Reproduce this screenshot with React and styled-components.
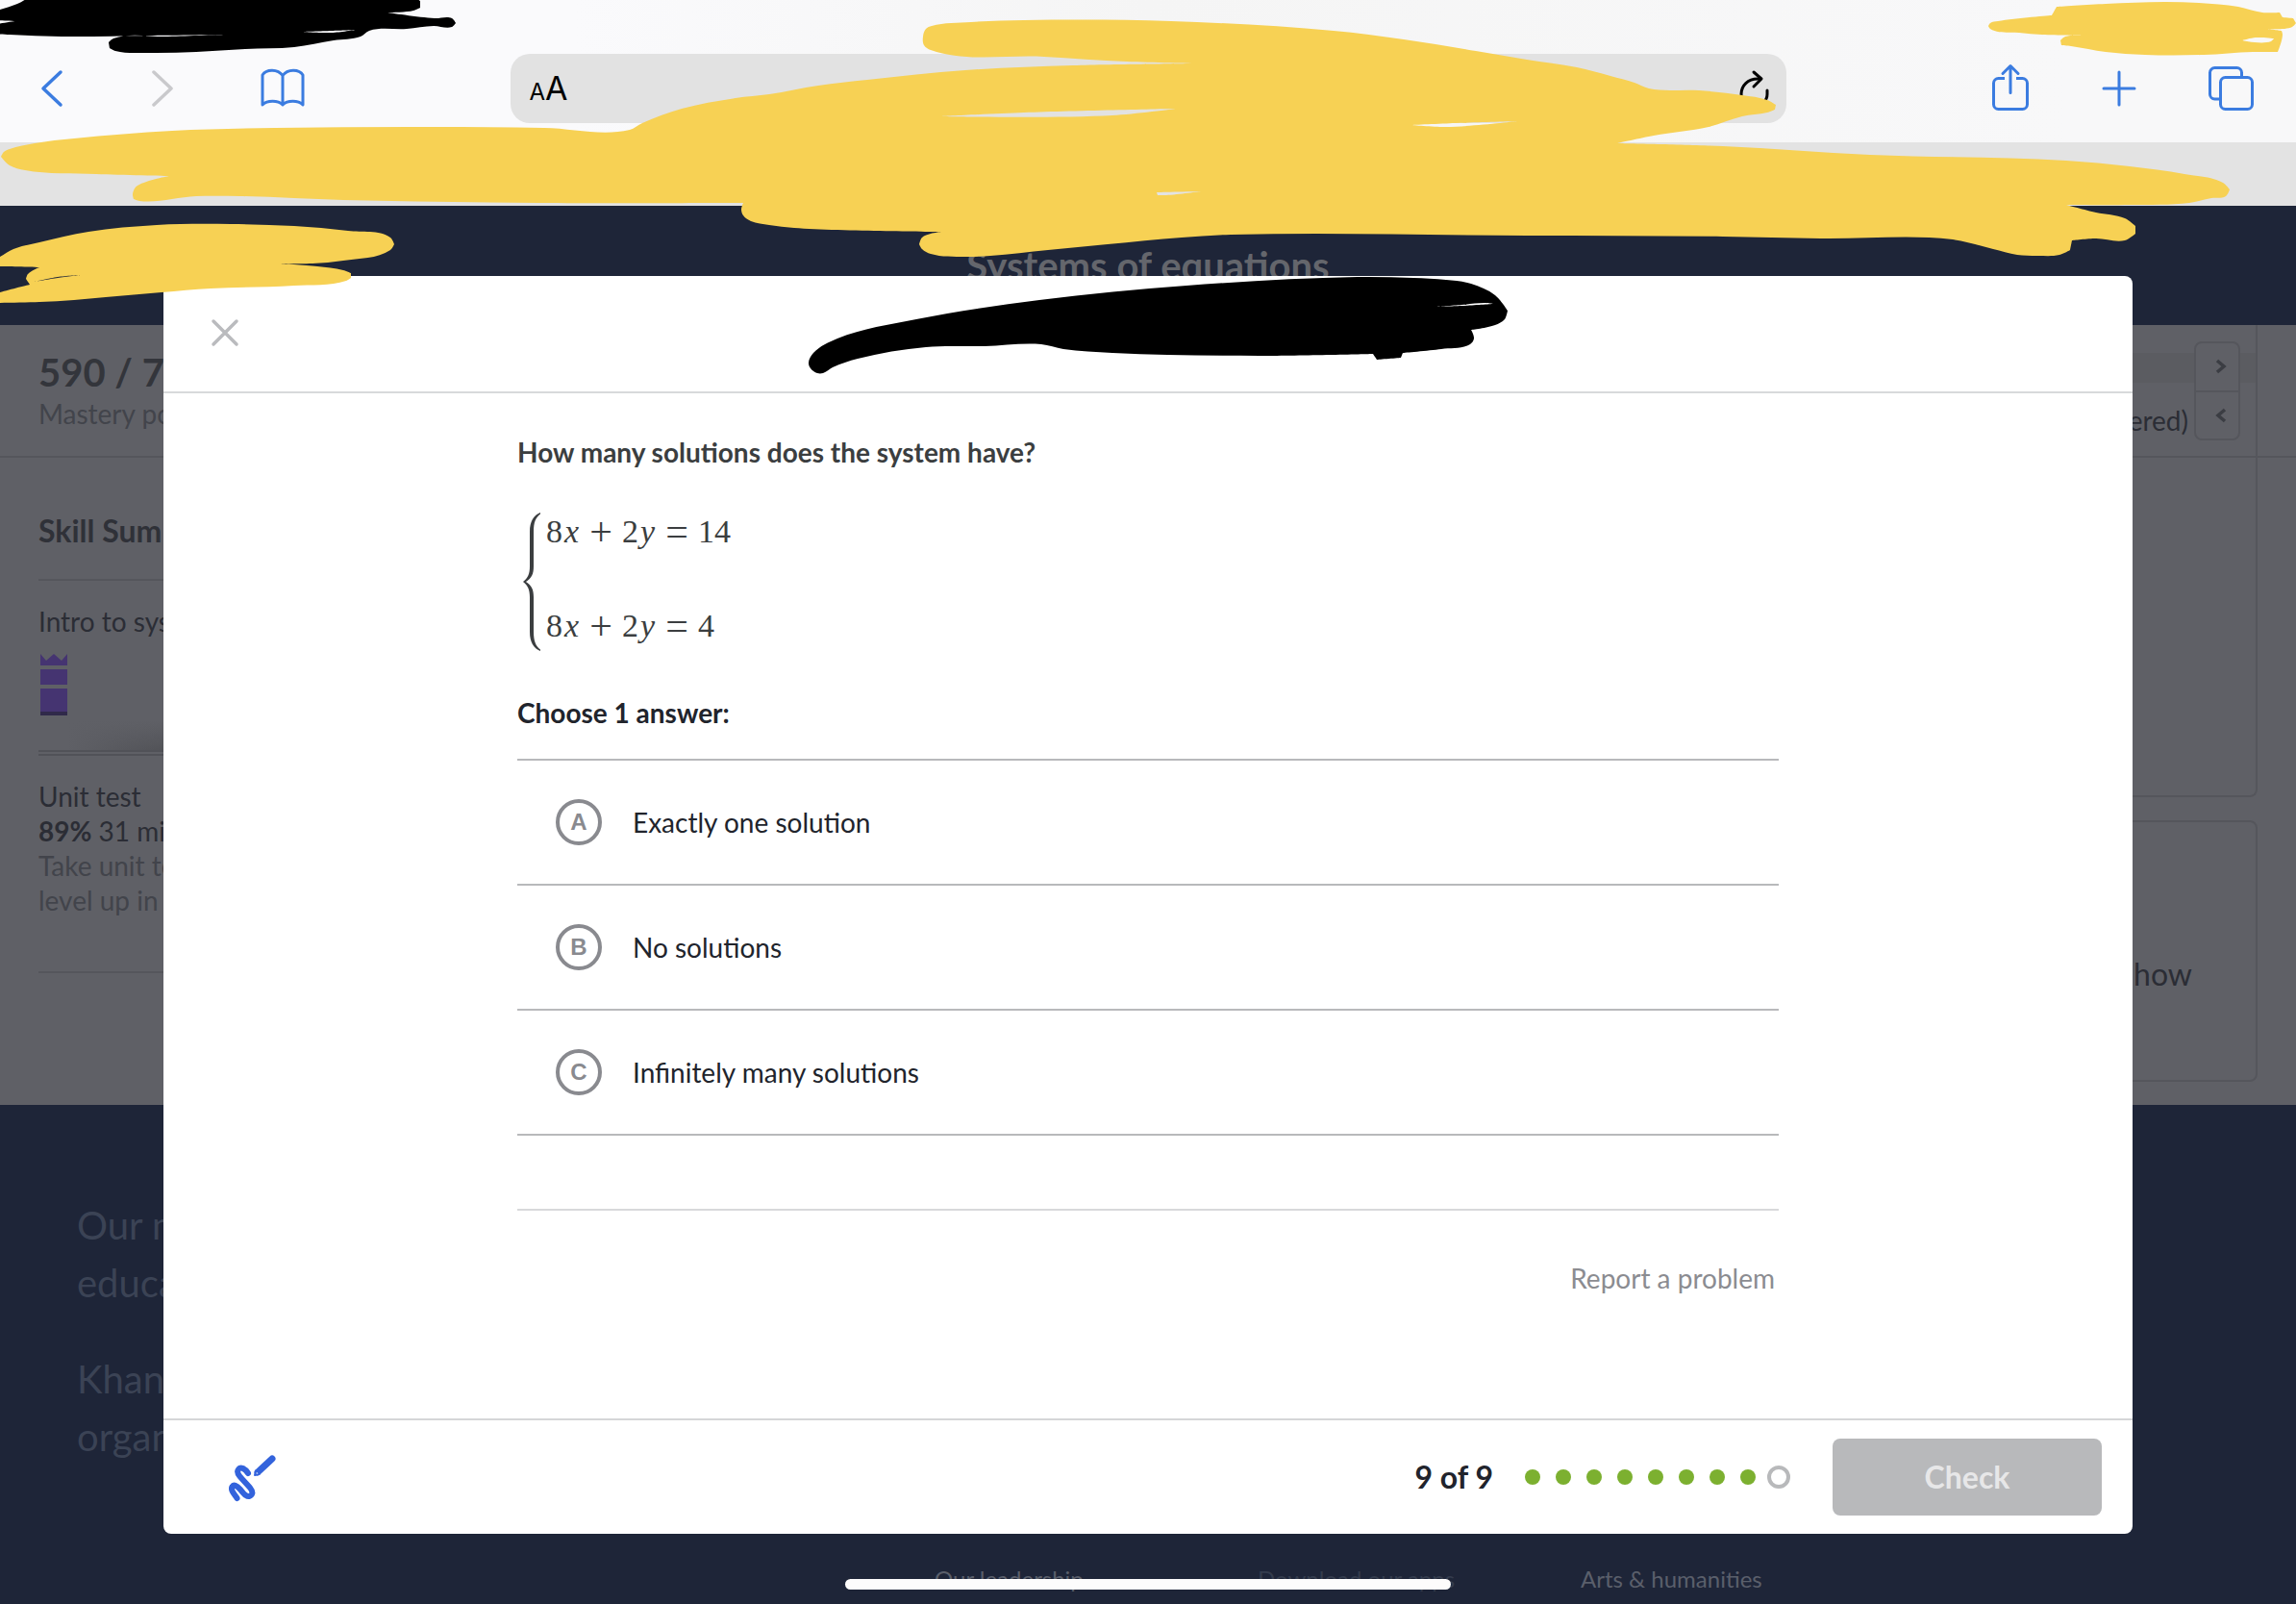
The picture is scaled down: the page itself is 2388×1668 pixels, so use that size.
import React, { useState } from "react";
import styled, { createGlobalStyle } from "styled-components";

const GlobalStyle = createGlobalStyle`
  * {
    box-sizing: border-box;
  }
  body {
    margin: 0;
    font-family: Lato, "Open Sans", sans-serif;
    font-size: 28px;
    line-height: 36px;
    color: #21242c;
  }
  h1, h2, h3, p {
    margin: 0;
  }
  button, input {
    font: inherit;
  }
`;

const Page = styled.div`
  position: relative;
  display: flex;
  flex-direction: column;
  min-height: 100vh;
  overflow: hidden;
`;

/* browser bar */
const Toolbar = styled.header`
  display: grid;
  grid-template-columns: 1fr minmax(0, 1327px) 1fr;
  align-items: center;
  height: 148px;
  padding: 56px 40px 20px;
  background: linear-gradient(90deg, #fafafc 25%, #f5f5f5 50%, #f8f8f9 90%);
`;
const ToolGroup = styled.div`
  display: flex;
  align-items: center;
  gap: ${({ $gap }) => $gap};
  justify-content: ${({ $end }) => ($end ? "flex-end" : "flex-start")};
  padding-right: ${({ $end }) => ($end ? "4px" : "0")};
`;
const IconButton = styled.button`
  display: flex;
  padding: 0;
  border: 0;
  background: none;
  color: ${({ $color }) => $color || "#3b7ce0"};
`;
const AddressBar = styled.div`
  display: flex;
  align-items: center;
  justify-content: space-between;
  height: 72px;
  padding: 0 18px 0 20px;
  border-radius: 20px;
  background: #e2e2e2;
`;
const TextSize = styled.button`
  padding: 4px 0 0;
  border: 0;
  background: none;
  color: #000;
  font-family: Inter, sans-serif;
  font-size: 34px;
`;
const SmallA = styled.span`
  font-size: 24px;
`;
const TabStrip = styled.div`
  height: 66px;
  background: #e3e3e3;
`;

/* dimmed site */
const Site = styled.main`
  position: relative;
  flex: 1;
  display: flex;
  flex-direction: column;
  background: #1e2538;
`;
const UnitHeader = styled.div`
  height: 124px;
  padding-top: 36px;
  text-align: center;
`;
const UnitTitle = styled.h1`
  font-size: 40px;
  line-height: 52px;
  color: #64666c;
`;
const Content = styled.div`
  display: flex;
  flex-direction: column;
  height: 811px;
  background: #5f6066;
  color: #2b2d35;
`;
const StatsRow = styled.div`
  display: flex;
  justify-content: space-between;
  height: 138px;
  border-bottom: 2px solid #55565c;
`;
const Points = styled.div`
  padding: 24px 0 0 40px;
`;
const PointsValue = styled.p`
  font-size: 40px;
  line-height: 50px;
  font-weight: 700;
  color: #33353b;
`;
const Muted = styled.p`
  color: #42444b;
`;
const MasteryPanel = styled.div`
  display: flex;
  justify-content: flex-end;
  width: 400px;
  margin-right: 40px;
  padding: 17px 16px 0 0;
  border-right: 2px solid #55565c;
  background: linear-gradient(#5b5c61, #5b5c61) 0 29px / 100% 31px no-repeat;
`;
const MasteryLabel = styled.span`
  margin-right: 6px;
  padding-top: 64px;
`;
const Stepper = styled.div`
  display: flex;
  flex-direction: column;
  width: 48px;
  height: 103px;
  border: 2px solid #55565c;
  border-radius: 8px;
  background: #5f6066;
`;
const StepButton = styled.button`
  flex: 1;
  display: flex;
  align-items: center;
  justify-content: flex-end;
  padding: 0 12px 0 0;
  border: 0;
  background: none;
  color: #3b3d43;

  & + & {
    border-top: 2px solid #55565c;
  }
`;
const Columns = styled.div`
  flex: 1;
  display: flex;
  justify-content: space-between;
`;
const Skills = styled.aside`
  width: 500px;
  padding: 56px 0 0 40px;
`;
const SkillsTitle = styled.h2`
  padding-bottom: 30px;
  border-bottom: 2px solid #55565c;
  font-size: 32px;
  line-height: 40px;
  color: #2f3138;
`;
const Skill = styled.div`
  height: 178px;
  padding-top: 24px;
  border-bottom: 2px solid #515258;
  background: linear-gradient(90deg, #5f6066 30px, transparent 130px) 0 100% / 100% 30px no-repeat,
    linear-gradient(#5f6066, #525358) 0 100% / 100% 30px no-repeat;
`;
const Crown = styled.svg`
  display: block;
  margin-top: 16px;
`;
const UnitTest = styled.div`
  height: 228px;
  margin-top: 2px;
  padding-top: 24px;
  border-top: 2px solid #515258;
  border-bottom: 2px solid #55565c;
`;
const Lessons = styled.div`
  display: flex;
  flex-direction: column;
  gap: 24px;
  width: 600px;
  padding-right: 40px;
  padding-bottom: 24px;
`;
const LessonCard = styled.section`
  flex: ${({ $grow }) => ($grow ? 1 : "none")};
  height: ${({ $grow }) => ($grow ? "auto" : "272px")};
  padding: 138px 66px 0 0;
  border: 2px solid #55565c;
  border-top-width: ${({ $grow }) => ($grow ? 0 : "2px")};
  border-radius: ${({ $grow }) => ($grow ? "0 0 8px 8px" : "8px")};
  font-size: 32px;
  line-height: 40px;
  text-align: right;
`;
const SiteFooter = styled.footer`
  flex: 1;
  display: flex;
  flex-direction: column;
  justify-content: space-between;
  padding: 95px 80px 10px;
`;
const Mission = styled.div`
  display: flex;
  flex-direction: column;
  gap: 40px;
  font-size: 40px;
  line-height: 60px;
  color: #3b4355;
`;
const FooterLinks = styled.nav`
  display: grid;
  grid-template-columns: repeat(3, 336px);
  justify-content: end;
  margin-right: 328px;
  font-size: 24px;
  line-height: 32px;
`;
const FooterLink = styled.a`
  color: ${({ $faint }) => ($faint ? "#343c4d" : "#5a5f6b")};
  text-decoration: none;
`;

/* exercise dialog */
const Overlay = styled.div`
  position: absolute;
  inset: 0;
  display: flex;
  padding: 73px 170px;
`;
const Dialog = styled.section`
  flex: 1;
  display: flex;
  flex-direction: column;
  border-radius: 8px;
  background: #fff;
  overflow: hidden;
`;
const DialogHeader = styled.header`
  display: flex;
  align-items: center;
  height: 122px;
  padding: 0 48px 2px;
  border-bottom: 2px solid #d8d9db;
`;
const DialogBody = styled.form`
  flex: 1;
  width: 100%;
  max-width: 1312px;
  margin: 0 auto;
  padding-top: 43px;
`;
const Question = styled.p`
  font-weight: 700;
  color: #3b3e40;
`;
const System = styled.div`
  display: flex;
  gap: 6px;
  margin: 45px 0 46px 6px;
  color: #3b3e40;
`;
const Equations = styled.div`
  display: flex;
  flex-direction: column;
  gap: 58px;
`;
const Equation = styled.div`
  display: flex;
  align-items: center;
  height: 40px;
  font-family: "Liberation Serif", serif;
  font-size: 34px;
  line-height: 40px;
`;
const Variable = styled.i`
  width: 19px;
  padding-left: 2px;
`;
const Operator = styled.span`
  width: 26px;
  margin: 0 9px 0 8px;
  font-size: 42px;
  text-align: center;
`;
const Choices = styled.fieldset`
  margin: 0;
  padding: 0;
  border: 0;
`;
const Legend = styled.legend`
  padding: 0 0 30px;
  font-weight: 700;
`;
const Choice = styled.label`
  display: flex;
  align-items: center;
  gap: 32px;
  height: 130px;
  padding-left: 40px;
  border-top: 2px solid #b8b9bb;

  &:last-child {
    height: 132px;
    border-bottom: 2px solid #b8b9bb;
  }
`;
const Radio = styled.input`
  appearance: none;
  position: absolute;
  width: 48px;
  height: 48px;
  margin: 0;
`;
const Letter = styled.span`
  display: flex;
  align-items: center;
  justify-content: center;
  width: 48px;
  height: 48px;
  border: 4px solid #898a8f;
  border-radius: 50%;
  font-family: "Liberation Sans", sans-serif;
  font-size: 24px;
  font-weight: 700;
  color: #898a8f;
`;
const ReportRow = styled.div`
  display: flex;
  justify-content: flex-end;
  margin-top: 76px;
  padding: 52px 4px 0;
  border-top: 2px solid #d8d9db;
`;
const ReportLink = styled.a`
  color: #8b8c91;
  text-decoration: none;
`;
const DialogFooter = styled.footer`
  display: flex;
  align-items: center;
  height: 120px;
  padding: 0 32px 0 66px;
  border-top: 2px solid #d5d6d8;
`;
const Progress = styled.strong`
  margin-left: auto;
  font-size: 32px;
`;
const Dots = styled.div`
  display: flex;
  align-items: center;
  gap: 16px;
  margin: 0 44px 0 33px;
`;
const Dot = styled.span`
  width: 16px;
  height: 16px;
  border-radius: 50%;
  background: #7cb030;
`;
const CurrentDot = styled(Dot)`
  width: 24px;
  height: 24px;
  margin-left: -4px;
  border: 4px solid #b8b9bb;
  background: #fff;
`;
const CheckButton = styled.button`
  width: 280px;
  height: 80px;
  border: 0;
  border-radius: 8px;
  background: #b8b9bb;
  color: #e7e7e8;
  font-size: 32px;
  font-weight: 700;
`;

const HomeIndicator = styled.div`
  position: absolute;
  left: 50%;
  bottom: 15px;
  width: 630px;
  height: 11px;
  margin-left: -315px;
  border-radius: 6px;
  background: #fdfcfc;
`;
const Markup = styled.svg`
  position: absolute;
  top: 0;
  left: 0;
  width: 100%;
  pointer-events: none;
`;

// marker strokes: closed outlines, the first one is the shape and the rest are gaps in it
const MARKS = [
  {
    color: "#000",
    outlines: [
      "-20,14 0,10 18,4 38,-6 424,-6 437,1 437,8 430,11 403,13 452,19 470,19 474,24 470,28 451,27 423,30 384,32 375,38 347,42 306,49 255,51 204,54 153,55 120,53 114,50 113,44 118,40 175,38 234,36 153,37 64,38 10,36 -20,34",
      "-4,21 16,22 -4,25",
      "314,33 345,32 370,31 345,34",
    ],
  },
  {
    color: "#f7d154",
    outlines: [
      "1,163 4,158 10,155 36,149 77,144 179,136 286,133 449,132 566,133 655,135 668,128 709,113 765,102 800,98 851,89 902,83 1004,73 1116,68 1244,66 1172,64 1086,59 968,52 961,47 960,38 963,30 969,27 1010,23 1065,21 1218,22 1387,32 1460,41 1535,53 1588,62 1640,70 1675,79 1700,86 1715,92 1767,94 1812,99 1838,104 1847,109 1846,114 1838,117 1812,121 1777,132 1720,141 1682,149 1792,152 1945,161 2149,167 2215,173 2272,181 2312,190 2319,197 2315,204 2300,206 2277,211 2216,213 2149,213 2180,221 2210,227 2221,235 2221,243 2210,250 2180,248 2155,250 2153,260 2142,265 2120,266 2098,265 2073,259 2031,249 1894,248 1792,246 1588,245 1280,244 1229,247 1152,254 1090,260 1030,266 1004,267 968,264 959,259 956,254 959,247 968,243 979,241 826,237 800,234 781,230 773,224 771,218 773,211 561,211 357,208 250,204 204,204 145,209 139,207 138,202 140,196 143,193 176,183 100,181 26,177 10,172",
      "979,121 1065,117 1223,113 1157,120",
      "1468,130 1514,128 1578,126 1504,132",
      "1203,200 1249,199 1213,203 1204,203",
    ],
  },
  {
    color: "#f7d154",
    outlines: [
      "-9,272 0,267 14,259 41,252 92,241 163,234 240,233 306,235 362,240 406,247 410,254 406,260 357,271 325,274 291,274 330,277 357,281 365,284 365,289 360,292 306,297 219,300 168,304 110,309 77,312 41,314 -9,315 -9,307 0,304 31,296 27,290 29,285 41,278 0,277 -9,277",
      "36,293 60,288 84,286 60,289",
    ],
  },
  {
    color: "#f7d154",
    outlines: [
      "2068,27 2070,24 2078,22 2134,16 2139,7 2190,4 2251,2 2287,3 2328,7 2353,13 2371,13 2374,18 2385,19 2388,24 2384,28 2358,30 2373,32 2374,36 2369,54 2343,54 2292,57 2231,57 2190,54 2154,48 2144,47 2143,42 2148,38 2167,37 2124,36 2100,34 2070,30",
      "2332,42 2346,39 2365,40 2362,43",
    ],
  },
  {
    color: "#000",
    outlines: [
      "841,377 846,367 871,352 953,332 1081,312 1234,297 1412,288 1470,289 1504,291 1530,295 1555,307 1568,323 1565,332 1555,338 1530,343 1533,352 1529,358 1499,363 1459,367 1457,372 1432,374 1428,368 1310,370 1157,367 1106,363 1083,358 1024,360 963,361 892,373 866,382 856,388 850,388 843,383",
      "1494,319 1520,317 1545,315 1553,316 1520,318",
    ],
  },
];

// rounds the gentle turns of an outline and leaves the sharp ones as corners
function outlineToPath(outline) {
  const pts = outline.split(" ").map((p) => p.split(",").map(Number));
  const n = pts.length;
  const dist = (a, b) => Math.hypot(b[0] - a[0], b[1] - a[1]) || 1;
  const tangents = pts.map((p, i) => {
    const a = pts[(i + n - 1) % n];
    const b = pts[(i + 1) % n];
    const u = [(p[0] - a[0]) / dist(a, p), (p[1] - a[1]) / dist(a, p)];
    const v = [(b[0] - p[0]) / dist(p, b), (b[1] - p[1]) / dist(p, b)];
    if (u[0] * v[0] + u[1] * v[1] < 0.6) return null;
    const len = Math.hypot(u[0] + v[0], u[1] + v[1]);
    return [(u[0] + v[0]) / len, (u[1] + v[1]) / len];
  });
  let d = `M${pts[0]}`;
  pts.forEach((p, i) => {
    const j = (i + 1) % n;
    const q = pts[j];
    const k = dist(p, q) / 3;
    const s = tangents[i] || [0, 0];
    const t = tangents[j] || [0, 0];
    const c1 = [p[0] + s[0] * k, p[1] + s[1] * k];
    const c2 = [q[0] - t[0] * k, q[1] - t[1] * k];
    d += `C${c1} ${c2} ${q}`;
  });
  return d + "Z";
}

const CHOICES = [
  { letter: "A", text: "Exactly one solution" },
  { letter: "B", text: "No solutions" },
  { letter: "C", text: "Infinitely many solutions" },
];

function BrowserBar() {
  return (
    <>
      <Toolbar>
        <ToolGroup $gap="88px">
          <IconButton aria-label="Back">
            <svg width="30" height="44" viewBox="0 0 30 44" fill="none" stroke="currentColor" strokeWidth="3.5" strokeLinecap="round" strokeLinejoin="round">
              <path d="M23 5 5 22l18 17" />
            </svg>
          </IconButton>
          <IconButton aria-label="Forward" $color="#c9c9cc">
            <svg width="24" height="44" viewBox="0 0 24 44" fill="none" stroke="currentColor" strokeWidth="3.5" strokeLinecap="round" strokeLinejoin="round">
              <path d="M2 5l18 17L2 39" />
            </svg>
          </IconButton>
          <IconButton aria-label="Bookmarks">
            <svg width="50" height="44" viewBox="0 0 50 44" fill="none" stroke="currentColor" strokeWidth="3" strokeLinejoin="round">
              <path d="M24 8.500C19 1.500 7 1.500 3 8v31c5-5 16-5 21 0 5-5 16-5 21 0V8c-4-6.500-16-6.500-21 .500zV39" />
            </svg>
          </IconButton>
        </ToolGroup>
        <AddressBar>
          <TextSize aria-label="Page settings">
            <SmallA>A</SmallA>A
          </TextSize>
          <IconButton aria-label="Reload" $color="#000">
            <svg width="34" height="40" viewBox="0 0 34 40" fill="none" stroke="currentColor" strokeWidth="3" strokeLinecap="round" strokeLinejoin="round">
              <path d="M25 10h-3C12 10 5 17 5 26a13.500 12.500 0 0 0 27 0v-4" />
              <path d="M18 3l8 7-8 8" />
            </svg>
          </IconButton>
        </AddressBar>
        <ToolGroup $end $gap="74px">
          <IconButton aria-label="Share">
            <svg width="42" height="52" viewBox="0 0 42 52" fill="none" stroke="currentColor" strokeWidth="3" strokeLinejoin="round">
              <path d="M15 15.500H8.500a5 5 0 0 0-5 5v22a5 5 0 0 0 5 5h25a5 5 0 0 0 5-5v-22a5 5 0 0 0-5-5H27" />
              <path d="M21 30.500V3M13 10.500L21 2.500l8 8" strokeLinecap="round" />
            </svg>
          </IconButton>
          <IconButton aria-label="New tab">
            <svg width="36" height="38" viewBox="0 0 36 38" fill="none" stroke="currentColor" strokeWidth="3" strokeLinecap="round">
              <path d="M18 2v34M2 19h32" />
            </svg>
          </IconButton>
          <IconButton aria-label="Tabs">
            <svg width="48" height="48" viewBox="0 0 48 48" fill="none" stroke="currentColor" strokeWidth="3" strokeLinejoin="round">
              <rect x="13.5" y="12.5" width="33" height="33" rx="5" />
              <path d="M13.500 35H7.500a5 5 0 0 1-5-5V7.500a5 5 0 0 1 5-5h23a5 5 0 0 1 5 5v5" />
            </svg>
          </IconButton>
        </ToolGroup>
      </Toolbar>
      <TabStrip />
    </>
  );
}

function UnitPage() {
  return (
    <>
      <UnitHeader>
        <UnitTitle>Systems of equations</UnitTitle>
      </UnitHeader>
      <Content>
        <StatsRow>
          <Points>
            <PointsValue>590 / 7</PointsValue>
            <Muted>Mastery po</Muted>
          </Points>
          <MasteryPanel>
            <MasteryLabel>ered)</MasteryLabel>
            <Stepper>
              <StepButton aria-label="Next">
                <svg width="12" height="16" viewBox="0 0 12 16" fill="none" stroke="currentColor" strokeWidth="3.5">
                  <path d="M2 2l7 6-7 6" />
                </svg>
              </StepButton>
              <StepButton aria-label="Previous">
                <svg width="12" height="16" viewBox="0 0 12 16" fill="none" stroke="currentColor" strokeWidth="3.5">
                  <path d="M10 2L3 8l7 6" />
                </svg>
              </StepButton>
            </Stepper>
          </MasteryPanel>
        </StatsRow>
        <Columns>
          <Skills>
            <SkillsTitle>Skill Sum</SkillsTitle>
            <Skill>
              <p>Intro to sys</p>
              <Crown width="32" height="64" viewBox="0 0 32 64">
                <path d="M2 0l6 7 8-7 8 7 6-7v12H2zM2 16h28v16H2zM2 36h28v24H2z" fill="#453471" />
                <path d="M2 60h28v4H2z" fill="#302a4a" />
              </Crown>
            </Skill>
            <UnitTest>
              <p>Unit test</p>
              <p>
                <b>89%</b> 31 mi
              </p>
              <Muted>Take unit te</Muted>
              <Muted>level up in</Muted>
            </UnitTest>
          </Skills>
          <Lessons>
            <LessonCard $grow />
            <LessonCard>how</LessonCard>
          </Lessons>
        </Columns>
      </Content>
      <SiteFooter>
        <Mission>
          <p>
            Our m
            <br />
            educa
          </p>
          <p>
            Khan
            <br />
            organ
          </p>
        </Mission>
        <FooterLinks>
          <FooterLink href="#leadership">Our leadership</FooterLink>
          <FooterLink href="#apps" $faint>
            Download our apps
          </FooterLink>
          <FooterLink href="#arts">Arts &amp; humanities</FooterLink>
        </FooterLinks>
      </SiteFooter>
    </>
  );
}

function SystemRow({ result }) {
  return (
    <Equation>
      8<Variable>x</Variable>
      <Operator>+</Operator>2<Variable>y</Variable>
      <Operator>=</Operator>
      {result}
    </Equation>
  );
}

function Exercise() {
  const [answer, setAnswer] = useState("");

  return (
    <Overlay>
      <Dialog role="dialog" aria-label="Exercise">
        <DialogHeader>
          <IconButton aria-label="Close" $color="#babbbe">
            <svg width="32" height="32" viewBox="0 0 32 32" fill="none" stroke="currentColor" strokeWidth="3.5" strokeLinecap="round">
              <path d="M4 4l24 24M28 4L4 28" />
            </svg>
          </IconButton>
        </DialogHeader>
        <DialogBody>
          <Question>How many solutions does the system have?</Question>
          <System>
            <svg width="18" height="144" viewBox="0 0 18 144" fill="currentColor">
              <path d="M18 0C11 3 7 9 7 20v36c0 8-2 12-7 16 5 4 7 8 7 16v36c0 11 4 17 11 20v-1.500c-5-4-7-9-7-18.500V88c0-8-2-12-8-16 6-4 8-8 8-16V20c0-10 2-14.500 7-18.500z" />
            </svg>
            <Equations>
              <SystemRow result="14" />
              <SystemRow result="4" />
            </Equations>
          </System>
          <Choices>
            <Legend>Choose 1 answer:</Legend>
            {CHOICES.map(({ letter, text }) => (
              <Choice key={letter}>
                <Radio type="radio" name="answer" checked={answer === letter} onChange={() => setAnswer(letter)} />
                <Letter>{letter}</Letter>
                {text}
              </Choice>
            ))}
          </Choices>
          <ReportRow>
            <ReportLink href="#report">Report a problem</ReportLink>
          </ReportRow>
        </DialogBody>
        <DialogFooter>
          <IconButton aria-label="Scratchpad" $color="#3363dc">
            <svg width="52" height="52" viewBox="-2 -2 52 52" fill="none" stroke="currentColor" strokeLinecap="round" strokeLinejoin="round">
              <path
                d="M20 20C16 14 12 13.500 10 16 7.500 19 10 21.500 12 24L22 35C26 40 24.500 43 21 44 17 44.500 15 40.500 12 37 8 32.500 5 31.500 3.500 34 1.500 37 5 41 8.500 46"
                strokeWidth="6"
              />
              <path d="M45 5L30 19" strokeWidth="7" />
              <path d="M27 22l1.500-5 3.500 3.500z" strokeWidth="2" fill="#fff" />
            </svg>
          </IconButton>
          <Progress>9 of 9</Progress>
          <Dots>
            {Array.from({ length: 8 }, (_, i) => (
              <Dot key={i} />
            ))}
            <CurrentDot />
          </Dots>
          <CheckButton type="submit">Check</CheckButton>
        </DialogFooter>
      </Dialog>
    </Overlay>
  );
}

export default function App() {
  return (
    <Page>
      <GlobalStyle />
      <BrowserBar />
      <Site>
        <UnitPage />
        <Exercise />
      </Site>
      <HomeIndicator />
      <Markup viewBox="0 0 2388 400" aria-hidden="true">
        {MARKS.map(({ color, outlines }, i) => (
          <path key={i} d={outlines.map(outlineToPath).join("")} fill={color} fillRule="evenodd" />
        ))}
      </Markup>
    </Page>
  );
}
